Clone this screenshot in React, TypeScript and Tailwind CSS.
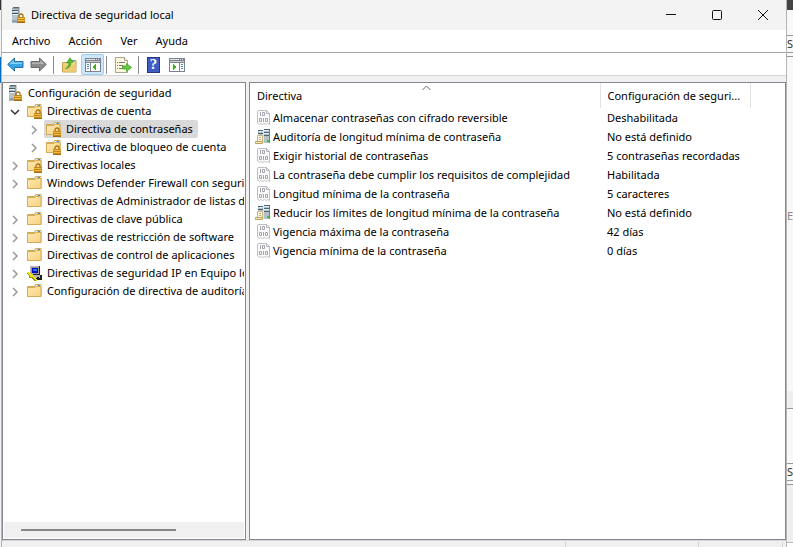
import type { ReactNode } from 'react';

type IconProps = { className?: string };

function ServerLock({ className = '' }: IconProps) {
  return (
    <svg className={className} width="15" height="16" viewBox="0 0 15 16" aria-hidden="true">
      <path d="M1 1.500 2.500 0H8.500V14L7 15.500H1Z" fill="#8b9ba6" />
      <path d="M1 2h6v13.500H1z" fill="#b4c3cc" />
      <path d="M1 3h6v1H1zM1 6h6v1H1z" fill="#4a5963" />
      <path d="M2 4h5v1H2zM2 7h5v1H2z" fill="#e6eef2" />
      <path d="M2 0h6v1H2z" fill="#5b6a75" />
      <path d="M1 13h6v2.500H1z" fill="#8fa2ae" />
      <Padlock x={5} y={6} />
    </svg>
  );
}

function Padlock({ x, y }: { x: number; y: number }) {
  return (
    <g transform={`translate(${x} ${y})`}>
      <path d="M3 5V3a2 2 0 0 1 4 0v2" fill="none" stroke="#a8720f" strokeWidth="1.300" />
      <rect x="1" y="4" width="8" height="6" rx="0.500" fill="#c48717" />
      <path d="M1.500 5h7v1h-7zM1.500 7h7v1h-7z" fill="#edbb47" />
      <path d="M1 9h8v1H1z" fill="#a66d10" />
    </g>
  );
}

function Folder({ lock = false, className = '' }: IconProps & { lock?: boolean }) {
  return (
    <svg className={className} width="15" height="16" viewBox="0 0 15 16" aria-hidden="true">
      <defs>
        <linearGradient id="folderFill" x1="0" y1="0" x2="1" y2="1">
          <stop offset="0" stopColor="#ffe9ae" />
          <stop offset="1" stopColor="#f5d182" />
        </linearGradient>
      </defs>
      <path d="M0.500 3.500h7l1-2h5.500v12H.500z" fill="#f3d38a" stroke="#d0a752" />
      <path d="M9 2h4.500v1.500H9z" fill="#fff" />
      <path d="M10.500 2h2.500v1h-2.500z" fill="#2f9be6" />
      <path d="M0.500 4.500h7.500l1-1h5v10H.500z" fill="url(#folderFill)" stroke="#d5ad58" />
      {lock && <Padlock x={6} y={6} />}
    </svg>
  );
}

function IpIcon() {
  return (
    <svg width="15" height="16" viewBox="0 0 15 16" aria-hidden="true" shapeRendering="crispEdges">
      <path d="M3 1h9l1 1v8H3z" fill="#222" />
      <path d="M3 1h9v1H4v7H3z" fill="#b8b8b8" />
      <path d="M4 2h8v7H4z" fill="#9a9a9a" />
      <path d="M5 3h6v5H5z" fill="#0000c8" />
      <path d="M6 4h4v2H6z" fill="#1683e8" />
      <path d="M4 10h10l1 1v4H7l-3-3z" fill="#222" />
      <path d="M5 10h8v3H6z" fill="#b5b5b5" />
      <path d="M10 12h2v1h-2z" fill="#222" />
      <path d="M0 7h2l3 2h1v2l4 4v1H9l-4-4H3V10L0 8z" fill="#f2e414" />
      <path d="M0 8l3 2v2h2l4 4H8l-4-3H2v-2L0 9z" fill="#9b9210" />
    </svg>
  );
}

function Binary() {
  return (
    <svg width="14" height="15" viewBox="0 0 14 15" aria-hidden="true">
      <path d="M1 .500h8.500L12.500 3.500V14.500l-2-1-1 1-2-1-2 1-2-1-1 1L.500 13V1z" fill="#fafafa" stroke="#c0bec4" />
      <path d="M9.500.500v3h3" fill="none" stroke="#b5b3b9" />
      <g fill="none" stroke="#a5a3ac">
        <path d="M3.500 2v4M5.500 2.500h2v3h-2zM2.500 8.500h2v3h-2zM6.500 8v4M8.500 8.500h2v3h-2z" />
      </g>
    </svg>
  );
}

function ServerDoc() {
  return (
    <svg width="16" height="15" viewBox="0 0 16 15" aria-hidden="true">
      <path d="M3 1h6v12H3z" fill="#b3c2ca" />
      <path d="M9 0h6v14H9z" fill="#b3c2ca" />
      <path d="M3 1h5v1H3zM3 4h5v1H3zM9 0h6v1H9zM9 3h6v1H9zM9 6h6v1H9z" fill="#4d6574" />
      <path d="M9 1h5v1H9zM9 4h5v1H9zM4 2h4v1H4z" fill="#e2edf2" />
      <path d="M14 1h1v13h-1z" fill="#6d8290" />
      <path d="M8 1h1v13H8z" fill="#dde6ea" />
      <path d="M12 11h2v2h-2z" fill="#35c637" />
      <path d="M2.500 6.500h5v6h-5z" fill="#fff5cf" stroke="#c9b77f" />
      <path d="M.500 12.500h7v2h-7z" fill="#f8e7a6" stroke="#b9a56b" />
      <path d="M4 8.500h2M4 10.500h2" stroke="#b6b096" />
    </svg>
  );
}

function Arrow({ back = false }: { back?: boolean }) {
  return (
    <svg width="17" height="15" viewBox="0 0 17 15" aria-hidden="true">
      <path
        d={back ? 'M.700 7.500 7.500 1v3.500h8.500v6H7.500V14z' : 'M16.300 7.500 9.500 1v3.500H1v6h8.500V14z'}
        fill={back ? '#35a5e8' : '#8c8c8c'}
        stroke={back ? '#2671ad' : '#696969'}
        strokeLinejoin="round"
      />
      <path
        d={back ? 'M2.500 7 6.500 3.200v2.300H15V7z' : 'M14.500 7l-4-3.800v2.300H2V7z'}
        fill={back ? '#86d3fa' : '#b4b4b4'}
      />
    </svg>
  );
}

function UpFolder() {
  return (
    <svg width="15" height="16" viewBox="0 0 15 16" aria-hidden="true">
      <path d="M.500 5.500H6l2-2h6v11.500H.500z" fill="#f4d683" stroke="#c9a24a" />
      <path d="M1 8h13v6.500H1z" fill="#eecb72" />
      <path d="M10 4h3" stroke="#3b99dc" />
      <path d="M3.500 11.500C6.500 10.500 7 8 6.800 5.500L4.500 6 8 .800 11 5.200 9 5.100C9 9 7 11.500 3.500 11.500z" fill="#52c234" stroke="#2f8f1d" strokeWidth=".600" />
    </svg>
  );
}

function PaneIcon({ right = false }: { right?: boolean }) {
  return (
    <svg width="16" height="14" viewBox="0 0 16 14" aria-hidden="true" shapeRendering="crispEdges">
      <path d="M0 0h16v14H0z" fill="#7d838b" />
      <path d="M1 1h9v1H1zM11 1h1v1h-1zM13 1h1v1h-1z" fill="#dfe4ea" />
      <path d="M1 3h14v1H1z" fill="#c7ccd2" />
      <path d="M1 5h14v8H1z" fill="#fff" />
      {right ? (
        <>
          <path d="M10 5h1v8h-1z" fill="#7d838b" />
          <path d="M12 6h2v1h-2zM12 8h2v1h-2zM12 10h2v1h-2z" fill="#4d86b8" />
          <path d="M4 6l4 3-4 3z" fill="#3bb51f" />
        </>
      ) : (
        <>
          <path d="M5 5h1v8H5z" fill="#7d838b" />
          <path d="M2 6h2v1H2zM2 8h2v1H2zM2 10h2v1H2z" fill="#4d86b8" />
          <path d="M11 6L7 9l4 3z" fill="#3bb51f" />
        </>
      )}
    </svg>
  );
}

function ExportIcon() {
  return (
    <svg width="17" height="16" viewBox="0 0 17 16" aria-hidden="true">
      <path d="M.500 .500h9l3 3v12H.500z" fill="#fff9dd" stroke="#a8a48f" />
      <path d="M9.500.500v3h3" fill="#fff" stroke="#a8a48f" />
      <path d="M2 5.500h1M2 8.500h1M2 11.500h1M4 5.500h6M4 8.500h4M4 11.500h4" stroke="#77758a" />
      <path d="M7.500 9h4V6.500l5 4-5 4V12h-4z" fill="#67ca3f" stroke="#3a9a22" strokeWidth=".700" />
    </svg>
  );
}

function HelpIcon() {
  return (
    <span className="flex h-4 w-[13px] items-center justify-center border border-[#27377f] bg-[#3f5cc4] font-['Liberation_Serif',serif] text-[15px] leading-none font-bold text-white">
      ?
    </span>
  );
}

type Node = {
  label: string;
  level: 0 | 1 | 2;
  open?: boolean;
  leaf?: boolean;
  selected?: boolean;
  icon: ReactNode;
};

const tree: Node[] = [
  { label: 'Configuración de seguridad', level: 0, leaf: true, icon: <ServerLock /> },
  { label: 'Directivas de cuenta', level: 1, open: true, icon: <Folder lock /> },
  { label: 'Directiva de contraseñas', level: 2, selected: true, icon: <Folder lock /> },
  { label: 'Directiva de bloqueo de cuenta', level: 2, icon: <Folder lock /> },
  { label: 'Directivas locales', level: 1, icon: <Folder lock /> },
  { label: 'Windows Defender Firewall con seguridad avanzada', level: 1, icon: <Folder /> },
  { label: 'Directivas de Administrador de listas de redes', level: 1, leaf: true, icon: <Folder /> },
  { label: 'Directivas de clave pública', level: 1, icon: <Folder /> },
  { label: 'Directivas de restricción de software', level: 1, icon: <Folder /> },
  { label: 'Directivas de control de aplicaciones', level: 1, icon: <Folder /> },
  { label: 'Directivas de seguridad IP en Equipo local', level: 1, icon: <IpIcon /> },
  { label: 'Configuración de directiva de auditoría avanzada', level: 1, icon: <Folder /> },
];

const indent = { 0: 'pl-[2px]', 1: 'pl-[3px]', 2: 'pl-[22px]' };

function TreeRow({ node }: { node: Node }) {
  return (
    <li className={`flex h-[18px] gap-[2px] ${indent[node.level]}`}>
      {node.level > 0 && (
        <span className="flex w-4 shrink-0 items-center justify-center pt-px">
          {!node.leaf && (
            <button aria-label={`${node.open ? 'Contraer' : 'Expandir'} ${node.label}`}>
              <svg width="10" height="10" viewBox="0 0 10 10" fill="none" strokeWidth="1.500" aria-hidden="true">
                {node.open ? (
                  <path d="M1 3l4 4 4-4" stroke="#333" />
                ) : (
                  <path d="M3 1l4 4-4 4" stroke="#999" />
                )}
              </svg>
            </button>
          )}
        </span>
      )}
      <button
        className={`flex shrink-0 items-center gap-[5px] rounded-xs pr-[5px] pl-[2px] whitespace-nowrap ${
          node.selected ? 'bg-[#d9d9d9]' : ''
        }`}
      >
        {node.icon}
        {node.label}
      </button>
    </li>
  );
}

const policies = [
  ['Almacenar contraseñas con cifrado reversible', 'Deshabilitada'],
  ['Auditoría de longitud mínima de contraseña', 'No está definido'],
  ['Exigir historial de contraseñas', '5 contraseñas recordadas'],
  ['La contraseña debe cumplir los requisitos de complejidad', 'Habilitada'],
  ['Longitud mínima de la contraseña', '5 caracteres'],
  ['Reducir los límites de longitud mínima de la contraseña', 'No está definido'],
  ['Vigencia máxima de la contraseña', '42 días'],
  ['Vigencia mínima de la contraseña', '0 días'],
];

function TitleBar() {
  return (
    <header className="flex h-[30px] items-center bg-[#f3f3f3] pl-[9px]">
      <ServerLock />
      <h1 className="ml-[5px] flex-1">Directiva de seguridad local</h1>
      <div className="flex gap-9 pr-[18px]">
        <button aria-label="Minimizar">
          <svg width="10" height="10" viewBox="0 0 10 10" aria-hidden="true">
            <path d="M0 4.500h10" stroke="#111" />
          </svg>
        </button>
        <button aria-label="Maximizar">
          <svg width="10" height="10" viewBox="0 0 10 10" aria-hidden="true">
            <rect x=".500" y=".500" width="9" height="9" rx="1" fill="none" stroke="#111" />
          </svg>
        </button>
        <button aria-label="Cerrar">
          <svg width="10" height="10" viewBox="0 0 10 10" aria-hidden="true">
            <path d="M0 0l10 10M10 0L0 10" stroke="#111" />
          </svg>
        </button>
      </div>
    </header>
  );
}

function Divider() {
  return <span className="h-[18px] w-px bg-[#8d8d8d]" />;
}

function Toolbar() {
  return (
    <div role="toolbar" className="flex h-[23px] items-center border-b border-[#d5d5d5] bg-white pt-px pl-[5px]">
      <button aria-label="Atrás"><Arrow back /></button>
      <button aria-label="Adelante" className="mx-1.5"><Arrow /></button>
      <Divider />
      <button aria-label="Subir un nivel" className="mr-1 ml-2"><UpFolder /></button>
      <button
        aria-label="Mostrar u ocultar árbol de consola"
        className="flex h-[21px] w-[23px] items-center justify-center rounded-xs border border-[#99cdf5] bg-[#cce6fb]"
      >
        <PaneIcon />
      </button>
      <span className="ml-0.5 flex"><Divider /></span>
      <button aria-label="Exportar lista" className="mr-1.5 ml-2"><ExportIcon /></button>
      <Divider />
      <button aria-label="Ayuda" className="mr-[9px] ml-2"><HelpIcon /></button>
      <button aria-label="Mostrar u ocultar panel de acciones"><PaneIcon right /></button>
    </div>
  );
}

function PolicyTable() {
  return (
    <table className="w-full table-fixed border-collapse text-left whitespace-nowrap">
      <colgroup>
        <col className="w-[350px]" />
        <col className="w-[150px]" />
        <col />
      </colgroup>
      <thead>
        <tr className="h-[25px]">
          <th className="relative border-r border-[#e2e2e2] pl-[7px] font-normal">
            Directiva
            <svg className="absolute top-0.5 left-1/2 -ml-[3px]" width="9" height="6" viewBox="0 0 9 6" aria-hidden="true">
              <path d="M.500 5l4-4 4 4" fill="none" stroke="#666" />
            </svg>
          </th>
          <th className="border-r border-[#e2e2e2] pl-[7px] font-normal">Configuración de seguri...</th>
          <th />
        </tr>
      </thead>
      <tbody>
        {policies.map(([name, value]) => (
          <tr key={name} className="h-[19px]">
            <td className="p-0">
              <span className="flex items-center gap-[2px] pl-[5px]">
                <span className="flex w-4 justify-end">
                  {value === 'No está definido' ? <ServerDoc /> : <Binary />}
                </span>
                {name}
              </span>
            </td>
            <td className="p-0 pl-[7px]">{value}</td>
            <td />
          </tr>
        ))}
      </tbody>
    </table>
  );
}

function BackgroundEdge() {
  return (
    <aside className="flex w-1.5 shrink-0 flex-col overflow-hidden bg-[#f8f8f8] text-[#333]">
      <div className="h-[10px] bg-[#444]" />
      <div className="h-[25px]" />
      <div className="flex h-[18px] items-center border-y border-[#999]">S</div>
      <div className="h-1 border-b border-[#999]" />
      <div className="flex h-[334px] flex-col pt-[150px] text-[#888]">E</div>
      <div className="h-[18px] border-b border-[#999] bg-[#efefef]" />
      <div className="h-[54px]" />
      <div className="flex h-[18px] items-center border-y border-[#999]">S</div>
      <div className="h-1 border-b border-[#999]" />
      <div className="h-[58px] border-b border-[#bbb] bg-[#efefef]" />
      <div className="flex-1 bg-white" />
    </aside>
  );
}

export default function App() {
  return (
    <div className="flex min-h-screen bg-white font-['Noto_Sans','Open_Sans',sans-serif] text-[11px] leading-[18px] text-black">
      <aside className="flex w-px shrink-0 flex-col bg-[#f3f3f3]">
        <div className="h-[10px] bg-[#333]" />
        <div className="h-[47px]" />
        <div className="h-[26px] bg-[#0a6cbd]" />
      </aside>
      <main className="flex min-w-0 flex-1 flex-col border-x border-[#b4b4b4] bg-[#f0f0f0]">
        <TitleBar />
        <nav className="flex h-[23px] items-center gap-[18px] border-b border-[#a5a5a5] bg-white pl-[10px]">
          <button>Archivo</button>
          <button>Acción</button>
          <button>Ver</button>
          <button>Ayuda</button>
        </nav>
        <Toolbar />
        <div className="mt-[6px] flex flex-1 gap-[3px]">
          <section className="flex w-[244px] shrink-0 flex-col border border-[#828790] bg-white p-px">
            <ul className="flex-1 overflow-hidden">
              {tree.map((node) => (
                <TreeRow key={node.label} node={node} />
              ))}
            </ul>
            <div className="flex h-4 items-center bg-[#f0f0f0] px-[17px]">
              <div className="h-[2px] w-[155px] bg-[#868686]" />
            </div>
          </section>
          <section className="min-w-0 flex-1 border border-[#828790] bg-white">
            <PolicyTable />
          </section>
        </div>
        <footer className="flex h-[7px] justify-end border-t border-[#d5d5d5] pt-px pr-[3px]">
          <span className="w-[133px] border-l border-[#d5d5d5]" />
          <span className="w-[85px] border-x border-[#d5d5d5]" />
        </footer>
      </main>
      <BackgroundEdge />
    </div>
  );
}
